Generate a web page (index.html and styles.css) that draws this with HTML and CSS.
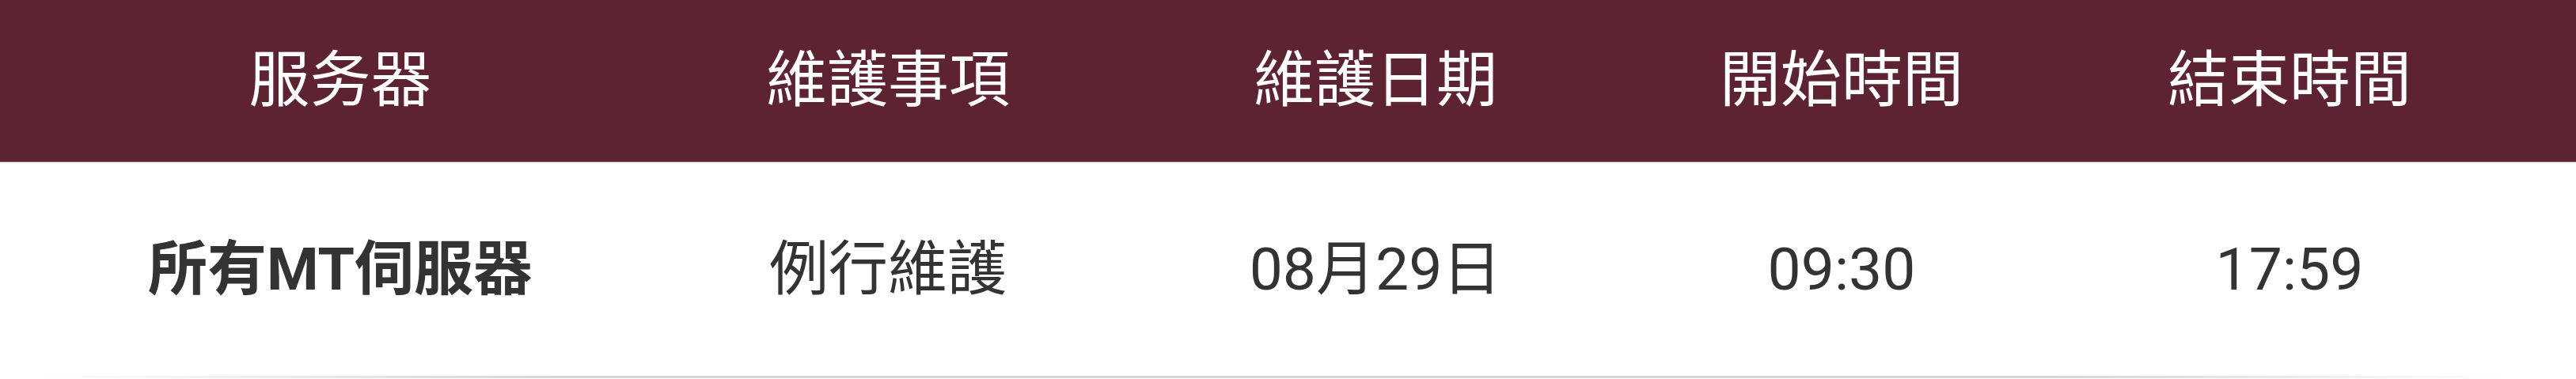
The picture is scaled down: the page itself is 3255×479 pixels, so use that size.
FILE: index.html
```html
<!DOCTYPE html>
<html lang="zh-Hant">
<head>
<meta charset="utf-8">
<title>維護公告</title>
<link rel="stylesheet" href="styles.css">
</head>
<body>
<div class="board">
  <div class="row head">
    <div class="cell">服务器</div>
    <div class="cell">維護事項</div>
    <div class="cell">維護日期</div>
    <div class="cell">開始時間</div>
    <div class="cell">結束時間</div>
  </div>
  <div class="row body-row">
    <div class="cell strong">所有MT伺服器</div>
    <div class="cell">例行維護</div>
    <div class="cell">08月29日</div>
    <div class="cell">09:30</div>
    <div class="cell">17:59</div>
  </div>
  <div class="rule"></div>
</div>
</body>
</html>
```

FILE: styles.css
```css
html, body {
  margin: 0;
  padding: 0;
  background: #ffffff;
}

.board {
  width: 3255px;
  font-family: Roboto, "Noto Sans CJK TC", "Noto Sans CJK SC", sans-serif;
  font-size: 77px;
  line-height: 1.2;
}

.row {
  display: grid;
  grid-template-columns: 780px 604px 628px 550px 582px;
  padding-left: 40px;
  align-items: center;
  justify-items: center;
}

.cell {
  white-space: nowrap;
}

.head {
  height: 204px;
  background: #5d2333;
  color: #ffffff;
  border-bottom: 1px solid #8e6571;
}

.body-row {
  height: 270px;
  color: #333333;
  font-size: 75px;
}

.strong {
  font-weight: 700;
}

.rule {
  height: 3px;
  background: linear-gradient(90deg,
    rgba(210, 210, 210, 0) 45px,
    #d6d6d6 700px,
    #d6d6d6 2600px,
    rgba(210, 210, 210, 0) 3170px);
}
```
